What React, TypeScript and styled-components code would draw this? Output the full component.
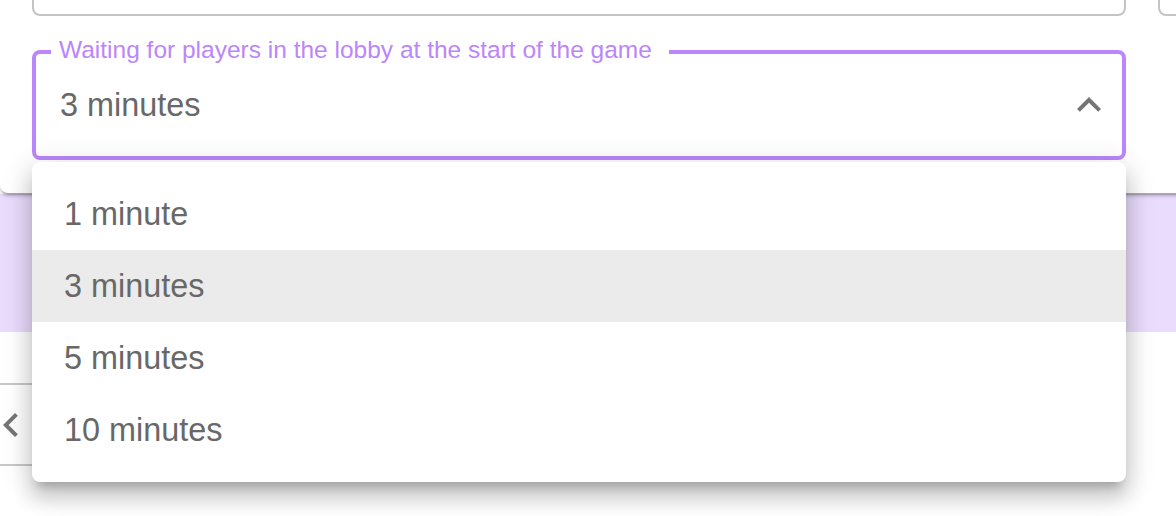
import React from "react";
import styled, { createGlobalStyle } from "styled-components";

const GlobalStyle = createGlobalStyle`
    body {
        margin: 0;
        background: #ffffff;
        font-family: "Liberation Sans", Arial, sans-serif;
        overflow: hidden;
    }
`;

const Page = styled.div`
    position: relative;
    width: 1176px;
    height: 516px;
    overflow: hidden;
`;

const Card = styled.div`
    position: relative;
    z-index: 1;
    margin-top: -128px;
    width: 1240px;
    padding: 32px 0 33px 32px;
    box-sizing: border-box;
    background: #ffffff;
    border-radius: 8px;
    box-shadow: 0 4px 2px -2px rgba(0, 0, 0, 0.2), 0 2px 4px 0 rgba(0, 0, 0, 0.14),
        0 2px 6px 0 rgba(0, 0, 0, 0.12);
    display: grid;
    grid-template-columns: 1094px 1fr;
    column-gap: 32px;
`;

const Column = styled.div`
    display: flex;
    flex-direction: column;
    gap: 22px;
`;

const TextField = styled.div`
    height: 112px;
    box-sizing: border-box;
    border: 2px solid #c4c4c4;
    border-radius: 8px;
`;

const Outline = styled.fieldset`
    margin: 0;
    padding: 0;
    min-width: 0;
    border: 4px solid #bb86fc;
    border-radius: 8px;
`;

const Legend = styled.legend`
    margin-left: 15px;
    padding: 0 17px 3px 8px;
    font-size: 24.5px;
    line-height: 24px;
    color: #bb86fc;
`;

const ValueRow = styled.div`
    height: 91px;
    box-sizing: border-box;
    padding: 0 9px 11px 24px;
    display: flex;
    align-items: center;
    justify-content: space-between;
    font-size: 32.4px;
    color: #686868;
`;

const Icon = styled.svg<{ $shift?: number }>`
    width: 48px;
    height: 48px;
    flex: none;
    fill: #757575;
    margin-left: ${(p) => p.$shift ?? 0}px;
`;

const Band = styled.div`
    height: 138px;
    margin-top: 1px;
    background: #eadcfd;
`;

const Pager = styled.div`
    margin-top: 51px;
    width: 1060px;
    height: 83px;
    box-sizing: border-box;
    border-top: 2px solid #c8c8c8;
    border-bottom: 2px solid #c8c8c8;
    display: flex;
    align-items: center;
`;

const Menu = styled.ul`
    position: absolute;
    z-index: 5;
    top: 162px;
    left: 32px;
    width: 1094px;
    margin: 0;
    padding: 16px 0;
    list-style: none;
    background: #ffffff;
    border-radius: 8px;
    box-shadow: 0 10px 10px -6px rgba(0, 0, 0, 0.2), 0 16px 20px 2px rgba(0, 0, 0, 0.14),
        0 6px 28px 4px rgba(0, 0, 0, 0.12);
`;

const MenuItem = styled.li<{ $selected?: boolean }>`
    padding: 12px 32px;
    font-size: 32.4px;
    line-height: 48px;
    color: #686868;
    background: ${(p) => (p.$selected ? "#ebebeb" : "transparent")};
`;

const options = ["1 minute", "3 minutes", "5 minutes", "10 minutes"];

export default function App() {
    const value = "3 minutes";
    return (
        <Page>
            <GlobalStyle />
            <Card>
                <Column>
                    <TextField />
                    <Outline>
                        <Legend>Waiting for players in the lobby at the start of the game</Legend>
                        <ValueRow>
                            <span>{value}</span>
                            <Icon viewBox="0 0 24 24">
                                <path d="M12 8l-6 6 1.41 1.41L12 10.83l4.59 4.58L18 14z" />
                            </Icon>
                        </ValueRow>
                    </Outline>
                </Column>
                <Column>
                    <TextField />
                </Column>
            </Card>
            <Band />
            <Pager>
                <Icon viewBox="0 0 24 24" $shift={-13}>
                    <path d="M15.41 7.41L14 6l-6 6 6 6 1.41-1.41L10.83 12z" />
                </Icon>
            </Pager>
            <Menu>
                {options.map((o) => (
                    <MenuItem key={o} $selected={o === value}>
                        {o}
                    </MenuItem>
                ))}
            </Menu>
        </Page>
    );
}
